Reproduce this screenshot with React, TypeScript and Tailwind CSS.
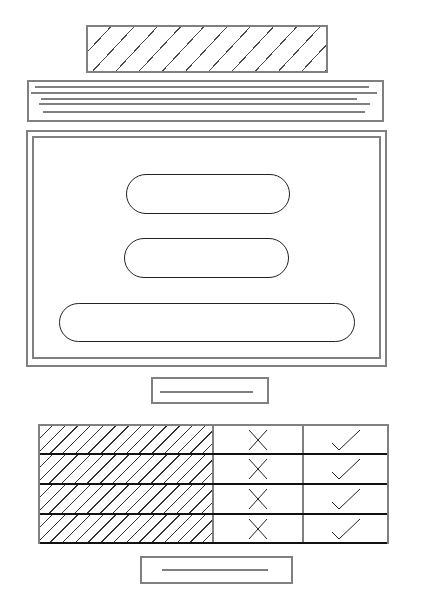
import React from 'react';

const CrossMark = () => (
  <svg width="20" height="22" viewBox="0 0 20 22" className="block">
    <path d="M1 1 L19 21 M19 1 L1 21" stroke="#222" strokeWidth="1" fill="none" />
  </svg>
);

const CheckMark = () => (
  <svg width="30" height="22" viewBox="0 0 30 22" className="block">
    <path d="M1 14 L8 21 L29 1" stroke="#222" strokeWidth="1" fill="none" />
  </svg>
);

const rowHeights = ['h-[29px]', 'h-[30px]', 'h-[30px]', 'h-[29px]'];

export default function App() {
  return (
    <div className="w-[421px] h-[600px] bg-white overflow-hidden">
      {/* banner */}
      <div className="mt-[25px] ml-[86px] w-[242px] h-[48px] border-2 border-[#808080] bg-[repeating-linear-gradient(133deg,transparent_0,transparent_16px,#4a4a4a_16px,#4a4a4a_17px)]" />

      {/* text block */}
      <div className="mt-[7px] ml-[27px] w-[357px] h-[42px] border-2 border-[#808080] flex flex-col">
        <div className="mt-[4px] ml-[6px] w-[334px] h-[2px] bg-[#808080]" />
        <div className="mt-[4px] ml-[2px] w-[346px] h-[2px] bg-[#808080]" />
        <div className="mt-[4px] ml-[12px] w-[316px] h-[2px] bg-[#808080]" />
        <div className="mt-[3px] ml-[10px] w-[331px] h-[2px] bg-[#808080]" />
        <div className="mt-[6px] ml-[14px] w-[322px] h-[2px] bg-[#808080]" />
      </div>

      {/* form */}
      <div className="mt-[8px] ml-[26px] w-[361px] h-[237px] border-2 border-[#808080]">
        <div className="mt-[4px] ml-[4px] w-[349px] h-[223px] border-2 border-[#808080] flex flex-col">
          <div className="mt-[36px] ml-[92px] w-[164px] h-[40px] rounded-full border border-[#222]" />
          <div className="mt-[24px] ml-[90px] w-[165px] h-[40px] rounded-full border border-[#222]" />
          <div className="mt-[25px] ml-[25px] w-[296px] h-[39px] rounded-full border border-[#222]" />
        </div>
      </div>

      {/* button */}
      <div className="mt-[10px] ml-[151px] w-[118px] h-[27px] border-2 border-[#808080]">
        <div className="mt-[12px] ml-[7px] w-[93px] h-[2px] bg-[#808080]" />
      </div>

      {/* table */}
      <div className="mt-[20px] ml-[38px] w-[351px] border-x-2 border-t-2 border-[#808080]">
        {rowHeights.map((h, i) => (
          <div key={i} className={`flex ${h} border-b-2 border-[#111]`}>
            <div className="w-[172px] bg-[repeating-linear-gradient(135deg,transparent_0,transparent_8px,#333_8px,#333_9px)]" />
            <div className="w-[90px] border-l-2 border-[#808080] flex items-center justify-center">
              <CrossMark />
            </div>
            <div className="flex-1 border-l-2 border-[#808080] flex items-center justify-center">
              <CheckMark />
            </div>
          </div>
        ))}
      </div>

      {/* bottom button */}
      <div className="mt-[12px] ml-[140px] w-[153px] h-[28px] border-2 border-[#808080]">
        <div className="mt-[11px] ml-[20px] w-[106px] h-[2px] bg-[#808080]" />
      </div>
    </div>
  );
}
